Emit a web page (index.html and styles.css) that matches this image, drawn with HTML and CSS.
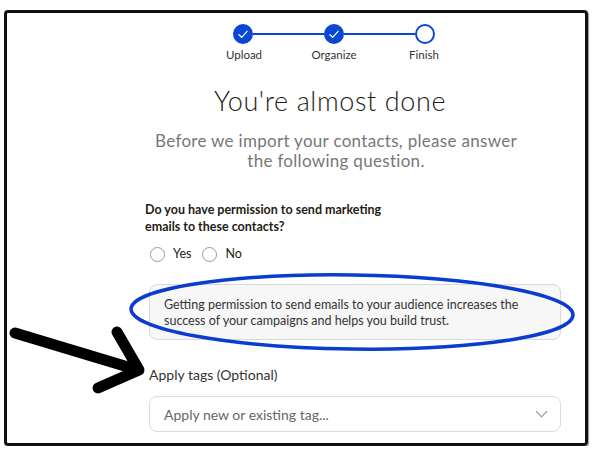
FILE: index.html
```html
<!DOCTYPE html>
<html>

<head>
  <meta charset="utf-8">
  <link rel="stylesheet" href="styles.css">
</head>

<body>
  <div class="frame">
    <div class="header">
      <div class="stepper">
        <span class="dot done">
          <svg viewBox="0 0 20 20" width="20" height="20"><path d="M5.5 10.2l3.2 3.1 5.8-6.4" fill="none" stroke="#fff" stroke-width="1.2"/></svg>
        </span>
        <span class="bar"></span>
        <span class="dot done">
          <svg viewBox="0 0 20 20" width="20" height="20"><path d="M5.5 10.2l3.2 3.1 5.8-6.4" fill="none" stroke="#fff" stroke-width="1.2"/></svg>
        </span>
        <span class="bar"></span>
        <span class="dot"></span>
      </div>
      <div class="step-labels">
        <span>Upload</span>
        <span>Organize</span>
        <span>Finish</span>
      </div>
      <h1>You're almost done</h1>
      <p class="lead">Before we import your contacts, please answer the following question.</p>
    </div>

    <div class="form">
      <p class="question">Do you have permission to send marketing<br>emails to these contacts?</p>
      <div class="radios">
        <label class="radio"><span class="ring"></span>Yes</label>
        <label class="radio"><span class="ring"></span>No</label>
      </div>
      <div class="note">Getting permission to send emails to your audience increases the success of your campaigns and helps you build trust.</div>
      <div class="field-label">Apply tags (Optional)</div>
      <div class="select">
        <span>Apply new or existing tag...</span>
        <svg viewBox="0 0 14 8" width="13" height="8"><path d="M1 1l6 6 6-6" fill="none" stroke="#888" stroke-width="1.1"/></svg>
      </div>
    </div>

    <!-- annotations drawn over the form -->
    <svg class="mark-ellipse" viewBox="0 0 450 82" width="450" height="82">
      <ellipse cx="224" cy="40" rx="221" ry="37" fill="none" stroke="#0a3cd2" stroke-width="3.5" transform="rotate(0.8 224 40)"/>
    </svg>
    <svg class="mark-arrow" viewBox="0 0 140 80" width="140" height="80">
      <g fill="none" stroke="#000" stroke-width="11" stroke-linecap="round" stroke-linejoin="round">
        <path d="M7 13L130 50"/>
        <path d="M109 12L131 50L90 68"/>
      </g>
    </svg>
  </div>
</body>

</html>
```

FILE: styles.css
```css
body {
  margin: 0;
  background: #fff;
  font-family: "Lato", "Liberation Sans", sans-serif;
  color: #241c15;
}

/* outer frame */
.frame {
  position: relative;
  margin: 10px 4px 0 4px;
  height: 436px;
  box-sizing: border-box;
  border: 3px solid #111;
  border-radius: 4px;
  box-shadow: 1px 1px 1px rgba(0, 0, 0, 0.4);
  overflow: hidden;
}

.header {
  width: 420px;
  margin-left: 113px;
  text-align: center;
}

/* stepper */
.stepper {
  display: flex;
  align-items: center;
  justify-content: center;
  padding-top: 11px;
  padding-left: 8px;
}

.dot {
  width: 20px;
  height: 20px;
  box-sizing: border-box;
  border: 2px solid #0b47d4;
  border-radius: 50%;
  background: #fff;
  display: flex;
}

.dot svg {
  margin: -2px;
}

.dot.done {
  background: #0b47d4;
}

.bar {
  width: 71px;
  height: 2px;
  background: #0b47d4;
}

.step-labels {
  display: flex;
  justify-content: center;
  margin-top: 4px;
  padding-left: 8px;
  font-size: 11.5px;
  line-height: 14px;
  color: #333;
}

.step-labels span {
  width: 90px;
}

h1 {
  margin: 24px 0 0 0;
  font-size: 27px;
  font-weight: 300;
  letter-spacing: 0.6px;
  line-height: 30px;
  color: #241c15;
}

.lead {
  margin: 15px 0 0 0;
  font-size: 17px;
  line-height: 20px;
  letter-spacing: 0.3px;
  color: #777;
  padding: 0 20px 0 32px;
}

/* form column */
.form {
  width: 412px;
  margin-left: 142px;
}

.question {
  margin: 30px 0 0 -4px;
  font-size: 12.5px;
  font-weight: 700;
  line-height: 17px;
  color: #241c15;
}

.radios {
  display: flex;
  gap: 11px;
  margin-top: 11px;
  margin-left: 1px;
}

.radio {
  display: flex;
  align-items: center;
  gap: 8px;
  font-size: 12.5px;
  line-height: 16px;
  color: #241c15;
}

.ring {
  width: 15px;
  height: 15px;
  box-sizing: border-box;
  border: 1px solid #999;
  border-radius: 50%;
}

.note {
  margin-top: 22px;
  height: 56px;
  box-sizing: border-box;
  padding: 12px 14px;
  border: 1px solid #d8d8d8;
  border-radius: 8px;
  background: #f7f7f7;
  font-size: 12.5px;
  line-height: 16px;
  color: #333;
}

.field-label {
  margin-top: 26px;
  font-size: 14px;
  line-height: 18px;
  color: #333;
}

.select {
  margin-top: 12px;
  height: 36px;
  box-sizing: border-box;
  padding: 0 12px 0 14px;
  border: 1px solid #dcdcdc;
  border-radius: 8px;
  display: flex;
  align-items: center;
  justify-content: space-between;
  font-size: 14px;
  color: #666;
}

.mark-ellipse {
  position: absolute;
  left: 121px;
  top: 259px;
}

.mark-arrow {
  position: absolute;
  left: 1px;
  top: 307px;
}
```
